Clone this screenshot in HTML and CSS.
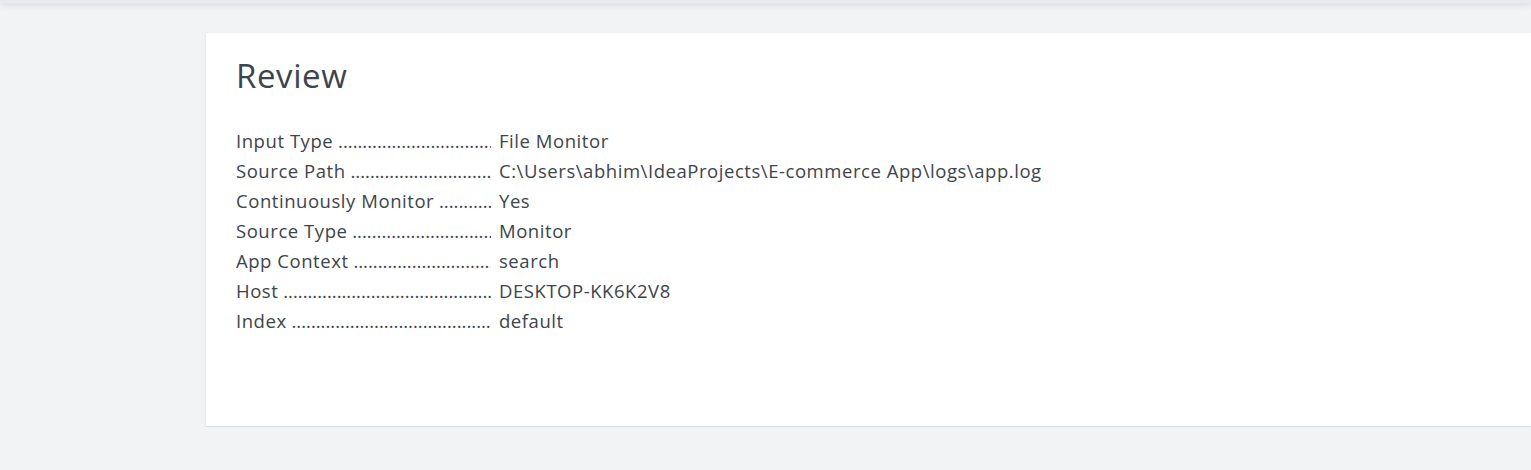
FILE: index.html
```html
<!DOCTYPE html>
<html>
<head>
<meta charset="utf-8">
<link rel="stylesheet" href="styles.css">
</head>
<body>
<div class="topbar"></div>
<main class="main">
  <section class="card">
    <h1 class="title">Review</h1>
    <dl class="review">
      <div class="row"><dt class="label">Input Type</dt><dd class="value">File Monitor</dd></div>
      <div class="row"><dt class="label">Source Path</dt><dd class="value">C:\Users\abhim\IdeaProjects\E-commerce App\logs\app.log</dd></div>
      <div class="row"><dt class="label">Continuously Monitor</dt><dd class="value">Yes</dd></div>
      <div class="row"><dt class="label">Source Type</dt><dd class="value">Monitor</dd></div>
      <div class="row"><dt class="label">App Context</dt><dd class="value">search</dd></div>
      <div class="row"><dt class="label">Host</dt><dd class="value">DESKTOP-KK6K2V8</dd></div>
      <div class="row"><dt class="label">Index</dt><dd class="value">default</dd></div>
    </dl>
  </section>
</main>
</body>
</html>
```
FILE: styles.css
```css
html, body {
  margin: 0;
  padding: 0;
}
body {
  background: #f2f3f5;
  font-family: "Open Sans", "Liberation Sans", sans-serif;
  color: #3c444d;
  height: 470px;
  overflow: hidden;
}
.topbar {
  height: 3px;
  background: #e8eaef;
  box-shadow: 0 1px 6px rgba(60, 70, 90, 0.25);
}
.main {
  padding: 30px 0 0 206px;
}
.card {
  background: #ffffff;
  height: 393px;
  box-sizing: border-box;
  padding: 23px 30px;
  box-shadow: -1px 0 2px rgba(0, 0, 0, 0.04), 0 1px 1px rgba(0, 0, 0, 0.08);
}
.title {
  margin: 0 0 30px;
  font-size: 33px;
  font-weight: 400;
  line-height: 40px;
  letter-spacing: 0.6px;
}
.review {
  margin: 0;
}
.row {
  display: flex;
  height: 30px;
  line-height: 30px;
  font-size: 18.5px;
  letter-spacing: 0.55px;
}
.label {
  width: 255px;
  white-space: nowrap;
  overflow: hidden;
  margin-right: 8px;
}
.label::after {
  content: " ..................................................................................................";
  letter-spacing: 0px;
}
.value {
  margin: 0;
  white-space: nowrap;
}
```
